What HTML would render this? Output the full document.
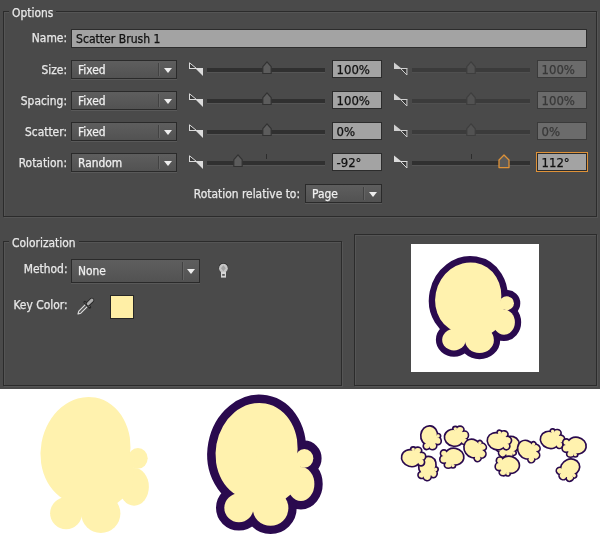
<!DOCTYPE html>
<html>
<head>
<meta charset="utf-8">
<title>Scatter Brush Options</title>
<style>
html,body{margin:0;padding:0;}
body{width:600px;height:548px;position:relative;overflow:hidden;background:#fff;font-family:"DejaVu Sans Condensed","DejaVu Sans","Liberation Sans",sans-serif;font-stretch:condensed;font-size:11.9px;color:#e8e8e8;-webkit-text-stroke:0.25px;}
#panel{position:absolute;left:0;top:0;width:600px;height:389px;background:#4a4a4a;will-change:transform;}
.abs{position:absolute;}
.fs{position:absolute;border:1px solid #2b2b2b;box-shadow:inset 1px 1px 0 #555, 1px 1px 0 #555;box-sizing:border-box;}
.legend{position:absolute;background:#4a4a4a;padding:0 3px;line-height:14px;height:14px;white-space:nowrap;}
.lbl{position:absolute;text-align:right;white-space:nowrap;line-height:14px;height:14px;}
.inp{position:absolute;box-sizing:border-box;border:1px solid #2c2c2c;background:#a3a3a3;color:#111;line-height:18px;padding-left:3.5px;white-space:nowrap;font-size:13px;}
.inp.dis{background:#6b6b6b;color:#383838;border-color:#3a3a3a;}
.inp.foc{box-shadow:0 0 0 1px #df9238;}
.dd{position:absolute;box-sizing:border-box;border:1px solid #2a2a2a;background:linear-gradient(#5e5e5e,#525252);color:#f0f0f0;line-height:19px;padding-left:6px;white-space:nowrap;box-shadow:0 1px 0 #595959;}
.dd .sep{position:absolute;top:2px;bottom:2px;width:1px;background:#424242;right:17px;box-shadow:1px 0 0 #636363;}
.dd .arr{position:absolute;right:4px;top:7px;width:0;height:0;border-left:4.5px solid transparent;border-right:4.5px solid transparent;border-top:5.5px solid #eee;}
.track{position:absolute;height:4px;background:#303030;box-shadow:0 1px 0 #555;}
.track.dis{background:#3b3b3b;box-shadow:0 1px 0 #505050;}
.tick{position:absolute;width:1px;height:5px;background:#2c2c2c;}
svg{position:absolute;overflow:visible;}
</style>
</head>
<body>
<div id="panel">
  <!-- Options group -->
  <div class="fs" style="left:3px;top:11px;width:594px;height:206px;"></div>
  <div class="legend" style="left:9px;top:6px;">Options</div>
  <div class="lbl" style="left:0;width:67px;top:31px;">Name:</div>
  <div class="inp" style="left:71px;top:29px;width:516px;height:19px;line-height:19px;font-size:12.1px;padding-left:4px;">Scatter Brush 1</div>
  <!-- Size: row -->
  <div class="lbl" style="left:0;width:67px;top:63px;">Size:</div>
  <div class="dd" style="left:71px;top:60px;width:106px;height:19px;">Fixed<span class="sep"></span><span class="arr"></span></div>
  <svg style="left:188.5px;top:61.5px" width="15" height="15" viewBox="0 0 15 15"><path d="M0.5 0.8 L0.5 6.5 L7.5 6.5 Z" fill="#383838" stroke="#dcdcdc" stroke-width="1"/><path d="M0 6.5 L14 6.5" stroke="#dcdcdc" stroke-width="1"/><path d="M6.5 6.5 L14 6.5 L14 14 Z" fill="#dcdcdc"/></svg>
  <div class="track" style="left:207px;top:68px;width:118px;"></div>
  <svg style="left:260.5px;top:60.5px" width="12" height="14" viewBox="0 0 12 14"><path d="M6 0.8 L10.2 5.6 L10.2 12.5 L1.8 12.5 L1.8 5.6 Z" fill="#5c5c5c" stroke="#323232" stroke-width="1.2" stroke-linejoin="round"/></svg>
  <div class="inp" style="left:332px;top:60px;width:50px;height:18px;">100%</div>
  <svg style="left:394px;top:61.5px" width="15" height="15" viewBox="0 0 15 15"><path d="M0 0.5 L0 6.5 L7.5 6.5 Z" fill="#d0d0d0"/><path d="M0 6.5 L13.4 6.5" stroke="#d0d0d0" stroke-width="1"/><path d="M6.6 6.5 L12.9 6.5 L12.9 13 Z" fill="#383838" stroke="#d0d0d0" stroke-width="1"/></svg>
  <div class="track dis" style="left:412px;top:68px;width:118px;"></div>
  <svg style="left:465px;top:60.5px" width="12" height="14" viewBox="0 0 12 14"><path d="M6 0.8 L10.2 5.6 L10.2 12.5 L1.8 12.5 L1.8 5.6 Z" fill="#525252" stroke="#3e3e3e" stroke-width="1.2" stroke-linejoin="round"/></svg>
  <div class="inp dis" style="left:537px;top:60px;width:50px;height:18px;">100%</div>
  <!-- Spacing: row -->
  <div class="lbl" style="left:0;width:67px;top:94px;">Spacing:</div>
  <div class="dd" style="left:71px;top:91px;width:106px;height:19px;">Fixed<span class="sep"></span><span class="arr"></span></div>
  <svg style="left:188.5px;top:92.5px" width="15" height="15" viewBox="0 0 15 15"><path d="M0.5 0.8 L0.5 6.5 L7.5 6.5 Z" fill="#383838" stroke="#dcdcdc" stroke-width="1"/><path d="M0 6.5 L14 6.5" stroke="#dcdcdc" stroke-width="1"/><path d="M6.5 6.5 L14 6.5 L14 14 Z" fill="#dcdcdc"/></svg>
  <div class="track" style="left:207px;top:99px;width:118px;"></div>
  <svg style="left:260.5px;top:91.5px" width="12" height="14" viewBox="0 0 12 14"><path d="M6 0.8 L10.2 5.6 L10.2 12.5 L1.8 12.5 L1.8 5.6 Z" fill="#5c5c5c" stroke="#323232" stroke-width="1.2" stroke-linejoin="round"/></svg>
  <div class="inp" style="left:332px;top:91px;width:50px;height:18px;">100%</div>
  <svg style="left:394px;top:92.5px" width="15" height="15" viewBox="0 0 15 15"><path d="M0 0.5 L0 6.5 L7.5 6.5 Z" fill="#d0d0d0"/><path d="M0 6.5 L13.4 6.5" stroke="#d0d0d0" stroke-width="1"/><path d="M6.6 6.5 L12.9 6.5 L12.9 13 Z" fill="#383838" stroke="#d0d0d0" stroke-width="1"/></svg>
  <div class="track dis" style="left:412px;top:99px;width:118px;"></div>
  <svg style="left:465px;top:91.5px" width="12" height="14" viewBox="0 0 12 14"><path d="M6 0.8 L10.2 5.6 L10.2 12.5 L1.8 12.5 L1.8 5.6 Z" fill="#525252" stroke="#3e3e3e" stroke-width="1.2" stroke-linejoin="round"/></svg>
  <div class="inp dis" style="left:537px;top:91px;width:50px;height:18px;">100%</div>
  <!-- Scatter: row -->
  <div class="lbl" style="left:0;width:67px;top:125px;">Scatter:</div>
  <div class="dd" style="left:71px;top:122px;width:106px;height:19px;">Fixed<span class="sep"></span><span class="arr"></span></div>
  <svg style="left:188.5px;top:123.5px" width="15" height="15" viewBox="0 0 15 15"><path d="M0.5 0.8 L0.5 6.5 L7.5 6.5 Z" fill="#383838" stroke="#dcdcdc" stroke-width="1"/><path d="M0 6.5 L14 6.5" stroke="#dcdcdc" stroke-width="1"/><path d="M6.5 6.5 L14 6.5 L14 14 Z" fill="#dcdcdc"/></svg>
  <div class="track" style="left:207px;top:130px;width:118px;"></div>
  <svg style="left:260.5px;top:122.5px" width="12" height="14" viewBox="0 0 12 14"><path d="M6 0.8 L10.2 5.6 L10.2 12.5 L1.8 12.5 L1.8 5.6 Z" fill="#5c5c5c" stroke="#323232" stroke-width="1.2" stroke-linejoin="round"/></svg>
  <div class="inp" style="left:332px;top:122px;width:50px;height:18px;">0%</div>
  <svg style="left:394px;top:123.5px" width="15" height="15" viewBox="0 0 15 15"><path d="M0 0.5 L0 6.5 L7.5 6.5 Z" fill="#d0d0d0"/><path d="M0 6.5 L13.4 6.5" stroke="#d0d0d0" stroke-width="1"/><path d="M6.6 6.5 L12.9 6.5 L12.9 13 Z" fill="#383838" stroke="#d0d0d0" stroke-width="1"/></svg>
  <div class="track dis" style="left:412px;top:130px;width:118px;"></div>
  <svg style="left:465px;top:122.5px" width="12" height="14" viewBox="0 0 12 14"><path d="M6 0.8 L10.2 5.6 L10.2 12.5 L1.8 12.5 L1.8 5.6 Z" fill="#525252" stroke="#3e3e3e" stroke-width="1.2" stroke-linejoin="round"/></svg>
  <div class="inp dis" style="left:537px;top:122px;width:50px;height:18px;">0%</div>
  <!-- Rotation: row -->
  <div class="lbl" style="left:0;width:67px;top:156px;">Rotation:</div>
  <div class="dd" style="left:71px;top:153px;width:106px;height:19px;">Random<span class="sep"></span><span class="arr"></span></div>
  <svg style="left:188.5px;top:154.5px" width="15" height="15" viewBox="0 0 15 15"><path d="M0.5 0.8 L0.5 6.5 L7.5 6.5 Z" fill="#383838" stroke="#dcdcdc" stroke-width="1"/><path d="M0 6.5 L14 6.5" stroke="#dcdcdc" stroke-width="1"/><path d="M6.5 6.5 L14 6.5 L14 14 Z" fill="#dcdcdc"/></svg>
  <div class="track" style="left:207px;top:161px;width:118px;"></div>
  <div class="tick" style="left:266px;top:154px;"></div>
  <svg style="left:232px;top:153.5px" width="12" height="14" viewBox="0 0 12 14"><path d="M6 0.8 L10.2 5.6 L10.2 12.5 L1.8 12.5 L1.8 5.6 Z" fill="#5c5c5c" stroke="#323232" stroke-width="1.2" stroke-linejoin="round"/></svg>
  <div class="inp" style="left:332px;top:153px;width:50px;height:18px;">-92°</div>
  <svg style="left:394px;top:154.5px" width="15" height="15" viewBox="0 0 15 15"><path d="M0 0.5 L0 6.5 L7.5 6.5 Z" fill="#dcdcdc"/><path d="M0 6.5 L13.4 6.5" stroke="#dcdcdc" stroke-width="1"/><path d="M6.6 6.5 L12.9 6.5 L12.9 13 Z" fill="#383838" stroke="#dcdcdc" stroke-width="1"/></svg>
  <div class="track" style="left:412px;top:161px;width:118px;"></div>
  <div class="tick" style="left:471px;top:154px;"></div>
  <svg style="left:497px;top:154.0px" width="14" height="16" viewBox="0 0 14 16"><path d="M7 1 L12 6 L12 13.6 L2 13.6 L2 6 Z" fill="#5a5a5a" stroke="#df9238" stroke-width="1.3" stroke-linejoin="round"/></svg>
  <div class="inp foc" style="left:537px;top:153px;width:50px;height:18px;">112°</div>
  <div class="lbl" style="left:150px;width:150px;top:187px;">Rotation relative to:</div>
  <div class="dd" style="left:305px;top:184px;width:77px;height:19px;">Page<span class="sep"></span><span class="arr"></span></div>

  <!-- Colorization group -->
  <div class="fs" style="left:3px;top:241px;width:339px;height:145px;"></div>
  <div class="legend" style="left:9px;top:236px;">Colorization</div>
  <div class="lbl" style="left:0;width:67.5px;top:262px;">Method:</div>
  <div class="dd" style="left:71px;top:259px;width:129px;height:24px;line-height:23px;">None<span class="sep" style="right:16px"></span><span class="arr" style="top:9px;"></span></div>
  <svg style="left:217px;top:262px" width="14" height="18" viewBox="217 262 14 18"><circle cx="223.4" cy="267.6" r="4.6" fill="#262626"/><circle cx="223.4" cy="268.2" r="4.4" fill="#c6c6c6"/><path d="M223.4 265.2 L225.8 268.2 L223.4 271.2 L221 268.2 Z" fill="#a2a2a2"/><rect x="221" y="272" width="5" height="5.6" fill="#d6d6d6"/><rect x="222.2" y="274" width="2.6" height="1.8" fill="#5a5a5a"/></svg>
  <div class="lbl" style="left:0;width:67.5px;top:298px;">Key Color:</div>
  <svg style="left:77px;top:297px" width="18" height="18" viewBox="0 0 18 18"><path d="M1 17 L1.8 14.2 L8.8 7.2 L10.8 9.2 L3.8 16.2 Z" fill="#555" stroke="#dedede" stroke-width="1.1" stroke-linejoin="round"/><path d="M7.8 5.2 L12.8 10.2" stroke="#262626" stroke-width="2.8" stroke-linecap="round"/><path d="M8.4 5.8 L12.2 9.6" stroke="#8c8c8c" stroke-width="1" stroke-linecap="round"/><path d="M11.2 6.8 L14.8 3.2" stroke="#262626" stroke-width="4.8" stroke-linecap="round"/><path d="M11.2 6.8 L14.9 3.1" stroke="#ababab" stroke-width="3" stroke-linecap="round"/></svg>
  <div class="abs" style="left:110px;top:295px;width:24px;height:24px;background:#ffefa6;box-sizing:border-box;border:1px solid #262626;"></div>

  <!-- preview -->
  <div class="fs" style="left:354px;top:234px;width:243px;height:152px;"></div>
  <div class="abs" style="left:411px;top:244px;width:128px;height:128px;background:#fff;"></div>
  <svg style="left:411px;top:244px" width="128" height="128" viewBox="0 0 128 128">
    <g transform="translate(23.6,17.9) scale(0.7358,0.6654)">
      <use href="#pc" fill="#2a0a4e" stroke="#2a0a4e" stroke-width="12.6"/>
      <use href="#pc" fill="#fff2ae"/>
    </g>
  </svg>
</div>
<svg width="0" height="0" style="left:0;top:0">
  <defs>
    <g id="pc">
      <ellipse cx="45.7" cy="54.4" rx="44.7" ry="53.9" transform="rotate(10.5 45.7 54.4)" vector-effect="non-scaling-stroke"/>
      <ellipse cx="98.1" cy="62.1" rx="9.8" ry="10.4" vector-effect="non-scaling-stroke"/>
      <ellipse cx="94.3" cy="90.6" rx="14.8" ry="18.9" vector-effect="non-scaling-stroke"/>
      <circle cx="26.3" cy="117" r="16" vector-effect="non-scaling-stroke"/>
      <circle cx="61" cy="117.3" r="19.6" vector-effect="non-scaling-stroke"/>
      <path d="M20 105 L46 60 L95 60 L92 95 L61 120 L26 120 Z" vector-effect="non-scaling-stroke"/>
    </g>
  </defs>
</svg>
<!-- artboard shapes -->
<svg style="left:0;top:390px" width="600" height="158" viewBox="0 390 600 158">
  <g transform="translate(39.8,396.2)"><use href="#pc" fill="#fff2ae"/></g>
  <g transform="translate(214.9,402.2) scale(0.912,0.903)">
    <use href="#pc" fill="#2a0a4e" stroke="#2a0a4e" stroke-width="16.6"/>
    <use href="#pc" fill="#fff2ae"/>
  </g>
  <g id="scatter">
    <g transform="translate(428.5,468.5) rotate(15) scale(0.17,0.165) translate(-56,-68)"><use href="#pc" fill="#2a0a4e" stroke="#2a0a4e" stroke-width="3.3"/><use href="#pc" fill="#fff2ae"/></g>
    <g transform="translate(413.5,456.6) rotate(-85) scale(0.17,0.165) translate(-56,-68)"><use href="#pc" fill="#2a0a4e" stroke="#2a0a4e" stroke-width="3.3"/><use href="#pc" fill="#fff2ae"/></g>
    <g transform="translate(431.1,437.6) rotate(-5) scale(0.17,0.165) translate(-56,-68)"><use href="#pc" fill="#2a0a4e" stroke="#2a0a4e" stroke-width="3.3"/><use href="#pc" fill="#fff2ae"/></g>
    <g transform="translate(452.0,458.4) rotate(90) scale(0.17,0.165) translate(-56,-68)"><use href="#pc" fill="#2a0a4e" stroke="#2a0a4e" stroke-width="3.3"/><use href="#pc" fill="#fff2ae"/></g>
    <g transform="translate(456.3,436.0) rotate(-90) scale(0.17,0.165) translate(-56,-68)"><use href="#pc" fill="#2a0a4e" stroke="#2a0a4e" stroke-width="3.3"/><use href="#pc" fill="#fff2ae"/></g>
    <g transform="translate(475.5,448.8) rotate(-45) scale(0.17,0.165) translate(-56,-68)"><use href="#pc" fill="#2a0a4e" stroke="#2a0a4e" stroke-width="3.3"/><use href="#pc" fill="#fff2ae"/></g>
    <g transform="translate(508.8,447.6) rotate(55) scale(0.17,0.165) translate(-56,-68)"><use href="#pc" fill="#2a0a4e" stroke="#2a0a4e" stroke-width="3.3"/><use href="#pc" fill="#fff2ae"/></g>
    <g transform="translate(499.3,439.9) rotate(-80) scale(0.17,0.165) translate(-56,-68)"><use href="#pc" fill="#2a0a4e" stroke="#2a0a4e" stroke-width="3.3"/><use href="#pc" fill="#fff2ae"/></g>
    <g transform="translate(507.4,466.3) rotate(95) scale(0.17,0.165) translate(-56,-68)"><use href="#pc" fill="#2a0a4e" stroke="#2a0a4e" stroke-width="3.3"/><use href="#pc" fill="#fff2ae"/></g>
    <g transform="translate(529.2,450.0) rotate(-45) scale(0.17,0.165) translate(-56,-68)"><use href="#pc" fill="#2a0a4e" stroke="#2a0a4e" stroke-width="3.3"/><use href="#pc" fill="#fff2ae"/></g>
    <g transform="translate(552.4,438.6) rotate(-80) scale(0.17,0.165) translate(-56,-68)"><use href="#pc" fill="#2a0a4e" stroke="#2a0a4e" stroke-width="3.3"/><use href="#pc" fill="#fff2ae"/></g>
    <g transform="translate(574.3,447.4) rotate(90) scale(0.17,0.165) translate(-56,-68)"><use href="#pc" fill="#2a0a4e" stroke="#2a0a4e" stroke-width="3.3"/><use href="#pc" fill="#fff2ae"/></g>
    <g transform="translate(569.3,470.3) rotate(55) scale(0.17,0.165) translate(-56,-68)"><use href="#pc" fill="#2a0a4e" stroke="#2a0a4e" stroke-width="3.3"/><use href="#pc" fill="#fff2ae"/></g>
  </g>
</svg>
</body>
</html>
